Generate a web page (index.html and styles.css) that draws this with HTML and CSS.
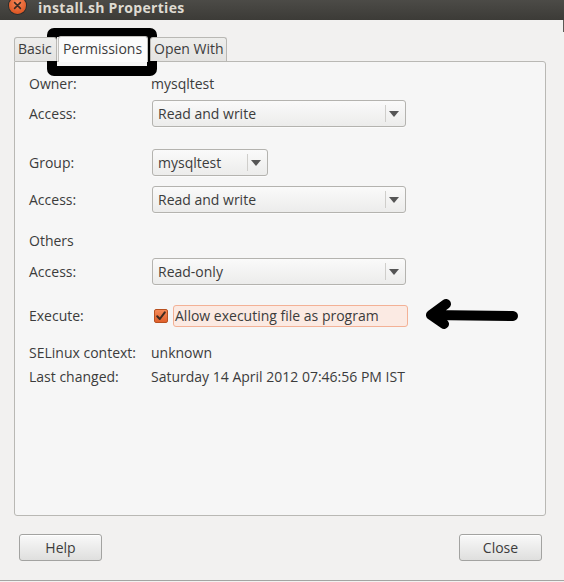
FILE: index.html
```html
<!DOCTYPE html>
<html lang="en">
<head>
<meta charset="utf-8">
<title>install.sh Properties</title>
<link rel="stylesheet" href="styles.css">
</head>
<body>
<div class="window">
  <header class="titlebar">
    <span class="close-btn"><svg width="17" height="17" viewBox="0 0 17 17"><path d="M5.6 5.6 L11.4 11.4 M11.4 5.6 L5.6 11.4" stroke="#3a2a22" stroke-width="1.6" stroke-linecap="round"/></svg></span>
    <span class="title">install.sh Properties</span>
  </header>
  <span class="frame-edge"></span>
  <main class="content">
    <div class="notebook">
      <div class="tabs">
        <div class="tab tab-basic">Basic</div>
        <div class="tab tab-active">Permissions</div>
        <div class="tab tab-open">Open With</div>
      </div>
      <div class="highlight-box"></div>
      <div class="panel">
        <div class="row row-owner"><span class="label">Owner:</span><span class="value">mysqltest</span></div>
        <div class="row row-access1"><span class="label">Access:</span>
          <div class="combo combo-wide"><span class="combo-text">Read and write</span><span class="combo-sep"></span><span class="combo-arrow"></span></div>
        </div>
        <div class="row row-group"><span class="label">Group:</span>
          <div class="combo combo-narrow"><span class="combo-text">mysqltest</span><span class="combo-sep"></span><span class="combo-arrow"></span></div>
        </div>
        <div class="row row-access2"><span class="label">Access:</span>
          <div class="combo combo-wide"><span class="combo-text">Read and write</span><span class="combo-sep"></span><span class="combo-arrow"></span></div>
        </div>
        <div class="row row-others"><span class="label">Others</span></div>
        <div class="row row-access3"><span class="label">Access:</span>
          <div class="combo combo-wide"><span class="combo-text">Read-only</span><span class="combo-sep"></span><span class="combo-arrow"></span></div>
        </div>
        <div class="row row-execute"><span class="label">Execute:</span>
          <div class="check-wrap">
            <span class="checkbox"><svg width="12" height="12" viewBox="0 0 12 12"><path d="M2.2 6.2 L4.8 9 L9.8 2.4" fill="none" stroke="#3d2a20" stroke-width="2" stroke-linecap="round" stroke-linejoin="round"/></svg></span>
            <span class="check-label">Allow executing file as program</span>
          </div>
        </div>
        <div class="row row-selinux"><span class="label">SELinux context:</span><span class="value">unknown</span></div>
        <div class="row row-changed"><span class="label">Last changed:</span><span class="value">Saturday 14 April 2012 07:46:56 PM IST</span></div>
      </div>
    </div>
    <footer class="buttons">
      <button class="btn">Help</button>
      <button class="btn">Close</button>
    </footer>
  </main>
  <svg class="arrow" width="104" height="36" viewBox="0 0 104 36"><path d="M93 18 L11 17 M11 17 L26 6 M11 17 L24 26" fill="none" stroke="#000" stroke-width="10" stroke-linecap="round" stroke-linejoin="round"/></svg>
</div>
</body>
</html>
```
FILE: styles.css
```css
* { box-sizing: border-box; }
html, body { margin: 0; padding: 0; }
body {
  width: 564px;
  height: 582px;
  overflow: hidden;
  background: #f2f1f0;
  font-family: "Open Sans", "Noto Sans", sans-serif;
  font-size: 14px;
  color: #3c3c3c;
}
.window {
  position: relative;
  width: 564px;
  height: 581px;
  border-bottom: 1px solid #a4a4a2;
  background: #f2f1f0;
}
.titlebar {
  height: 20px;
  background: linear-gradient(#4c4b47, #3c3b37);
  display: flex;
  align-items: flex-start;
  position: relative;
}
.close-btn {
  position: absolute;
  left: 9px;
  top: -3px;
  width: 17px;
  height: 17px;
  border-radius: 50%;
  background: radial-gradient(circle at 50% 35%, #f7885a, #df5a27 70%, #c9491a);
  box-shadow: 0 0 0 1px #2e2d2a;
}
.close-btn svg { display: block; }
.title {
  margin-left: 38px;
  font-weight: bold;
  font-size: 14px;
  letter-spacing: 0.3px;
  line-height: 16px;
  padding-top: 0;
  color: #dfdbd2;
  white-space: nowrap;
}
.frame-edge {
  position: absolute;
  right: 0;
  top: 20px;
  width: 1px;
  height: 12px;
  background: #5a5955;
}
.content {
  padding: 17px 18px 0 14px;
}
.notebook {
  position: relative;
}
.tabs {
  position: relative;
  z-index: 2;
  display: flex;
  align-items: flex-end;
  height: 24px;
}
.tab {
  height: 24px;
  line-height: 22px;
  border: 1px solid #b9b8b4;
  border-bottom: none;
  border-radius: 3px 3px 0 0;
  background: linear-gradient(#eeeeec, #e4e3e1);
  padding: 0 3px;
  white-space: nowrap;
}
.tab-basic { width: 43px; }
.tab-active {
  width: 90px;
  height: 26px;
  margin-left: 1px;
  margin-bottom: -1px;
  background: #fbfbfb;
  border-color: #c2c1bd;
  padding-left: 4px;
  line-height: 24px;
}
.tab-open { width: 77px; margin-left: 2px; }
.highlight-box {
  position: absolute;
  z-index: 1;
  left: 33px;
  top: -9px;
  width: 110px;
  height: 48px;
  border: 10px solid #000;
  border-top-width: 9px;
  border-radius: 7px;
}
.panel {
  height: 455px;
  border: 1px solid #b9b8b4;
  border-radius: 0 3px 3px 3px;
  background: #f6f6f6;
  padding: 12px 0 0 14px;
}
.row {
  display: grid;
  grid-template-columns: 122px auto;
  align-items: center;
  height: 20px;
  line-height: 20px;
}
.row-access1 { margin-top: 6px; height: 27px; }
.row-group { margin-top: 22px; height: 27px; }
.row-access2 { margin-top: 10px; height: 27px; }
.row-others { margin-top: 18px; }
.row-access3 { margin-top: 7px; height: 27px; }
.row-execute { margin-top: 20px; height: 22px; }
.row-selinux { margin-top: 16px; }
.row-changed { margin-top: 4px; }
.label, .value { white-space: nowrap; }
.combo {
  position: relative;
  display: flex;
  align-items: center;
  height: 27px;
  margin-left: 1px;
  border: 1px solid #b4b3af;
  border-radius: 3px;
  background: linear-gradient(#fafafa, #ececeb);
  box-shadow: 0 1px 0 rgba(255,255,255,0.6);
  padding-left: 5px;
}
.combo-wide { width: 254px; }
.combo-narrow { width: 116px; }
.combo-text { flex: 1; white-space: nowrap; }
.combo-sep {
  width: 1px;
  height: 17px;
  background: #cfcecb;
  margin-right: 3px;
}
.combo-arrow {
  width: 0;
  height: 0;
  border-left: 5px solid transparent;
  border-right: 5px solid transparent;
  border-top: 6px solid #555;
  margin-right: 6px;
}
.check-wrap {
  display: flex;
  align-items: center;
  height: 22px;
}
.checkbox {
  width: 14px;
  height: 14px;
  margin-left: 3px;
  border: 1px solid #b8501f;
  border-radius: 2px;
  background: linear-gradient(#f58a58, #e0602c);
  display: flex;
  align-items: center;
  justify-content: center;
}
.checkbox svg { display: block; }
.check-label {
  margin-left: 5px;
  width: 235px;
  height: 22px;
  line-height: 20px;
  padding-left: 1px;
  border: 1px solid #f3b196;
  border-radius: 3px;
  background: #fbeae3;
  white-space: nowrap;
}
.buttons {
  display: flex;
  justify-content: space-between;
  padding: 18px 4px 0 5px;
}
.btn {
  width: 83px;
  height: 27px;
  font-family: inherit;
  font-size: 14px;
  color: #3c3c3c;
  border: 1px solid #a3a3a1;
  border-radius: 3px;
  background: linear-gradient(#f9f9f9, #dfdfde);
  box-shadow: inset 0 1px 0 #fff;
  padding: 0;
  line-height: 24px;
}
.arrow {
  position: absolute;
  left: 420px;
  top: 298px;
}
```
